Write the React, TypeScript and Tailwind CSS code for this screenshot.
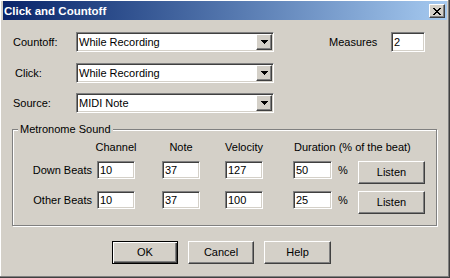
import React from "react";

const sunken =
  "border border-t-[#808080] border-l-[#808080] border-b-white border-r-white shadow-[inset_1px_1px_0_#404040,inset_-1px_-1px_0_#d4d0c8] bg-white";
const raised =
  "border border-t-white border-l-white border-b-[#404040] border-r-[#404040] shadow-[inset_-1px_-1px_0_#808080,inset_1px_1px_0_#d4d0c8] bg-[#d4d0c8]";

function Combo({ value }: { value: string }) {
  return (
    <div className={`${sunken} w-[198px] h-[20px] p-[1px] flex items-stretch`}>
      <div className="flex-1 flex items-center pl-[1px]">{value}</div>
      <div className={`${raised} w-[16px] h-[16px] flex items-center justify-center`}>
        <svg width="7" height="4" viewBox="0 0 7 4" shapeRendering="crispEdges">
          <rect x="0" y="0" width="7" height="1" fill="#000" />
          <rect x="1" y="1" width="5" height="1" fill="#000" />
          <rect x="2" y="2" width="3" height="1" fill="#000" />
          <rect x="3" y="3" width="1" height="1" fill="#000" />
        </svg>
      </div>
    </div>
  );
}

function Field({ value, w, h = 18, ml = "" }: { value: string; w: string; h?: number; ml?: string }) {
  return (
    <div className={`${sunken} ${w} ${h === 18 ? "h-[18px]" : "h-[20px]"} ${ml} flex items-center pl-[2px]`}>
      {value}
    </div>
  );
}

function Btn({ label, w, isDefault = false }: { label: string; w: string; isDefault?: boolean }) {
  if (isDefault) {
    return (
      <div
        className={`${w} h-[23px] border border-black bg-[#d4d0c8] shadow-[inset_1px_1px_0_#fff,inset_-1px_-1px_0_#404040,inset_-2px_-2px_0_#808080] flex items-center justify-center`}
      >
        {label}
      </div>
    );
  }
  return <div className={`${raised} ${w} h-[23px] flex items-center justify-center`}>{label}</div>;
}

function BeatRow({ label, ch, note, vel, dur, mt }: { label: string; ch: string; note: string; vel: string; dur: string; mt: string }) {
  return (
    <div className={`${mt} flex items-start h-[23px]`}>
      <div className="w-[84px] h-[18px] flex items-center justify-end pr-[5px] whitespace-nowrap">{label}</div>
      <Field value={ch} w="w-[38px]" />
      <Field value={note} w="w-[38px]" ml="ml-[27px]" />
      <Field value={vel} w="w-[38px]" ml="ml-[25px]" />
      <Field value={dur} w="w-[39px]" ml="ml-[30px]" />
      <div className="ml-[6px] w-[20px] h-[18px] flex items-center">%</div>
      <Btn label="Listen" w="w-[67px]" />
    </div>
  );
}

export default function App() {
  return (
    <div className="w-[450px] h-[278px] bg-[#d4d0c8] font-['Liberation_Sans',Arial,sans-serif] text-[11px] leading-[13px] text-black border-r border-b border-r-[#404040] border-b-[#404040] shadow-[inset_-1px_-1px_0_#808080,inset_1px_1px_0_#fff] flex flex-col overflow-hidden">
      <div className="mt-[1px] ml-[3px] mr-[2px] h-[19px] bg-linear-to-r from-[#0a246a] to-[#a6caf0] flex items-center justify-between pl-[1px] pr-[2px]">
        <span className="text-white font-bold text-[11.5px] leading-[14px]">Click and Countoff</span>
        <div className={`${raised} w-[16px] h-[14px] flex items-center justify-center mt-[1px]`}>
          <svg width="8" height="7" viewBox="0 0 8 7" shapeRendering="crispEdges">
            <path
              d="M0 0h2v1h-2z M6 0h2v1h-2z M1 1h2v1h-2z M5 1h2v1h-2z M2 2h4v1h-4z M3 3h2v1h-2z M2 4h4v1h-4z M1 5h2v1h-2z M5 5h2v1h-2z M0 6h2v1h-2z M6 6h2v1h-2z"
              fill="#000"
            />
          </svg>
        </div>
      </div>

      <div className="mt-[12px] flex items-center h-[20px]">
        <span className="ml-[13px] w-[63px]">Countoff:</span>
        <Combo value="While Recording" />
        <span className="ml-[55px] w-[62px]">Measures</span>
        <Field value="2" w="w-[34px]" h={20} />
      </div>

      <div className="mt-[11px] flex items-center h-[20px]">
        <span className="ml-[15px] w-[61px]">Click:</span>
        <Combo value="While Recording" />
      </div>

      <div className="mt-[10px] flex items-center h-[20px]">
        <span className="ml-[13px] w-[63px]">Source:</span>
        <Combo value="MIDI Note" />
      </div>

      <div className="mt-[16px] ml-[12px] w-[425px] h-[97px] relative border border-[#808080] shadow-[inset_1px_1px_0_#fff,1px_1px_0_#fff] pt-[11px]">
        <span className="absolute left-[5px] top-[-7px] px-[2px] bg-[#d4d0c8] leading-[13px] whitespace-nowrap">
          Metronome Sound
        </span>
        <div className="flex h-[13px]">
          <div className="w-[84px]" />
          <div className="w-[38px] flex justify-center whitespace-nowrap">Channel</div>
          <div className="ml-[27px] w-[38px] flex justify-center whitespace-nowrap">Note</div>
          <div className="ml-[25px] w-[38px] flex justify-center whitespace-nowrap">Velocity</div>
          <div className="ml-[30px] pl-[1px] whitespace-nowrap">Duration (% of the beat)</div>
        </div>
        <BeatRow label="Down Beats" ch="10" note="37" vel="127" dur="50" mt="mt-[7px]" />
        <BeatRow label="Other Beats" ch="10" note="37" vel="100" dur="25" mt="mt-[7px]" />
      </div>

      <div className="mt-[15px] ml-[112px] flex gap-[10px]">
        <Btn label="OK" w="w-[66px]" isDefault />
        <Btn label="Cancel" w="w-[66px]" />
        <Btn label="Help" w="w-[67px]" />
      </div>
    </div>
  );
}
